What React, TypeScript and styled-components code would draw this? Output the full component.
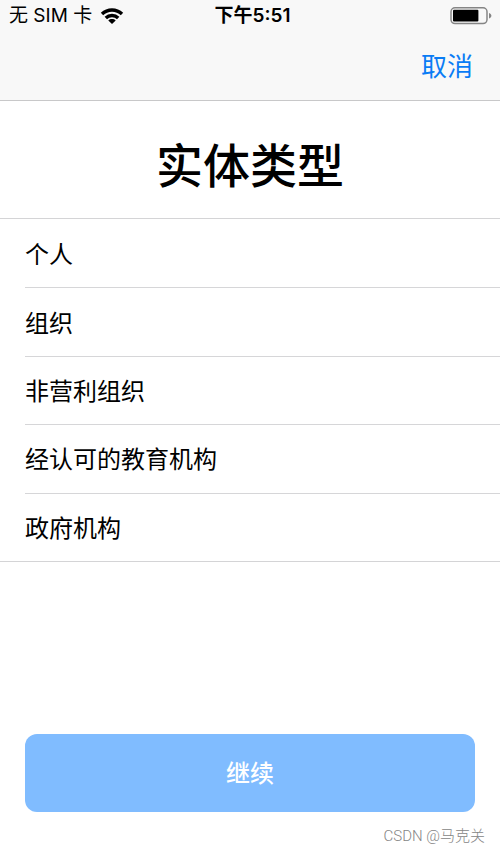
import React, { useState } from "react";
import styled, { createGlobalStyle } from "styled-components";

const GlobalStyle = createGlobalStyle`
  * { box-sizing: border-box; }
  body {
    margin: 0;
    background: #fff;
    color: #000;
    font-family: Inter, "Noto Sans CJK SC", sans-serif;
  }
  button { font-family: inherit; cursor: pointer; }
`;

const Page = styled.div`
  display: flex;
  flex-direction: column;
  min-height: 100vh;
`;

const Header = styled.header`
  background: #f8f8f8;
  border-bottom: 1px solid #c8c8c9;
`;

const StatusBar = styled.div`
  display: grid;
  grid-template-columns: 1fr auto 1fr;
  align-items: center;
  height: 32px;
  padding: 0 8px 0 9px;
  font-size: 19px;
  line-height: 32px;
`;

const Carrier = styled.div`
  display: flex;
  align-items: center;
  gap: 8px;
`;

const Time = styled.time`
  padding: 0 0 0 4px;
  font-weight: 600;
`;

const BatteryIcon = styled.svg`
  justify-self: end;
`;

const NavBar = styled.nav`
  display: flex;
  align-items: center;
  justify-content: flex-end;
  height: 68px;
  padding: 2px 27px 0;
`;

const CancelButton = styled.button`
  padding: 0;
  border: 0;
  background: none;
  color: #0a7cf5;
  font-size: 26px;
  line-height: 40px;
`;

const Title = styled.h1`
  margin: 0;
  padding: 29px 24px 16px;
  text-align: center;
  font-size: 47px;
  font-weight: 500;
  line-height: 72px;
`;

const OptionList = styled.ul`
  display: grid;
  grid-auto-rows: 1fr;
  min-height: 344px;
  margin: 0;
  padding: 0;
  list-style: none;
  border: solid #d4d4d6;
  border-width: 1px 0;
`;

const OptionItem = styled.li`
  display: flex;
  margin-left: 25px;
  & + & { border-top: 1px solid #d6d6d8; }
`;

const OptionButton = styled.button`
  flex: 1;
  padding: 3px 0 0;
  border: 0;
  background: none;
  color: #000;
  text-align: left;
  font-size: 24px;
  line-height: 36px;
`;

const Footer = styled.footer`
  display: flex;
  flex-direction: column;
  margin-top: auto;
  padding: 24px 25px 4px;
`;

const ContinueButton = styled.button`
  height: 78px;
  padding: 2px 0 0;
  border: 0;
  border-radius: 12px;
  background: #80bcff;
  color: #fff;
  font-size: 24px;
  font-weight: 500;
  line-height: 36px;
`;

const Credit = styled.small`
  align-self: flex-end;
  margin: 12px -10px 0 0;
  color: #858585;
  font-family: Roboto, "Noto Sans CJK SC", sans-serif;
  font-size: 15px;
  font-weight: 300;
  line-height: 24px;
`;

const options = ["个人", "组织", "非营利组织", "经认可的教育机构", "政府机构"];

function Wifi() {
  return (
    <svg width="24" height="18" viewBox="0 0 24 18" aria-hidden="true">
      <g fill="none" stroke="#000" strokeWidth="3.4">
        <path d="M2 7C7.6 1.6 16.4 1.6 22 7" />
        <path d="M5.8 11C9.2 7.6 14.8 7.6 18.2 11" />
      </g>
      <path d="M8.3 13.4C10.3 11.5 13.7 11.5 15.7 13.4L12 17Z" />
    </svg>
  );
}

function Battery() {
  return (
    <BatteryIcon width="42" height="18" viewBox="0 0 42 18" role="img" aria-label="电池">
      <rect x="1" y="0.8" width="36" height="15.8" rx="4" fill="none" stroke="#858585" strokeWidth="1.5" />
      <rect x="3" y="2.8" width="25.4" height="11.8" rx="1" />
      <path d="M39 6C42.2 7 42.2 10.5 39 11.5Z" fill="#858585" />
    </BatteryIcon>
  );
}

export default function App() {
  const [selected, setSelected] = useState<string | null>(null);
  return (
    <Page>
      <GlobalStyle />
      <Header>
        <StatusBar>
          <Carrier>
            <span>无 SIM 卡</span>
            <Wifi />
          </Carrier>
          <Time>下午5:51</Time>
          <Battery />
        </StatusBar>
        <NavBar>
          <CancelButton type="button">取消</CancelButton>
        </NavBar>
      </Header>
      <main>
        <Title>实体类型</Title>
        <OptionList>
          {options.map((name) => (
            <OptionItem key={name}>
              <OptionButton
                type="button"
                aria-pressed={selected === name}
                onClick={() => setSelected(name)}
              >
                {name}
              </OptionButton>
            </OptionItem>
          ))}
        </OptionList>
      </main>
      <Footer>
        <ContinueButton type="button">继续</ContinueButton>
        <Credit>CSDN @马克关</Credit>
      </Footer>
    </Page>
  );
}
